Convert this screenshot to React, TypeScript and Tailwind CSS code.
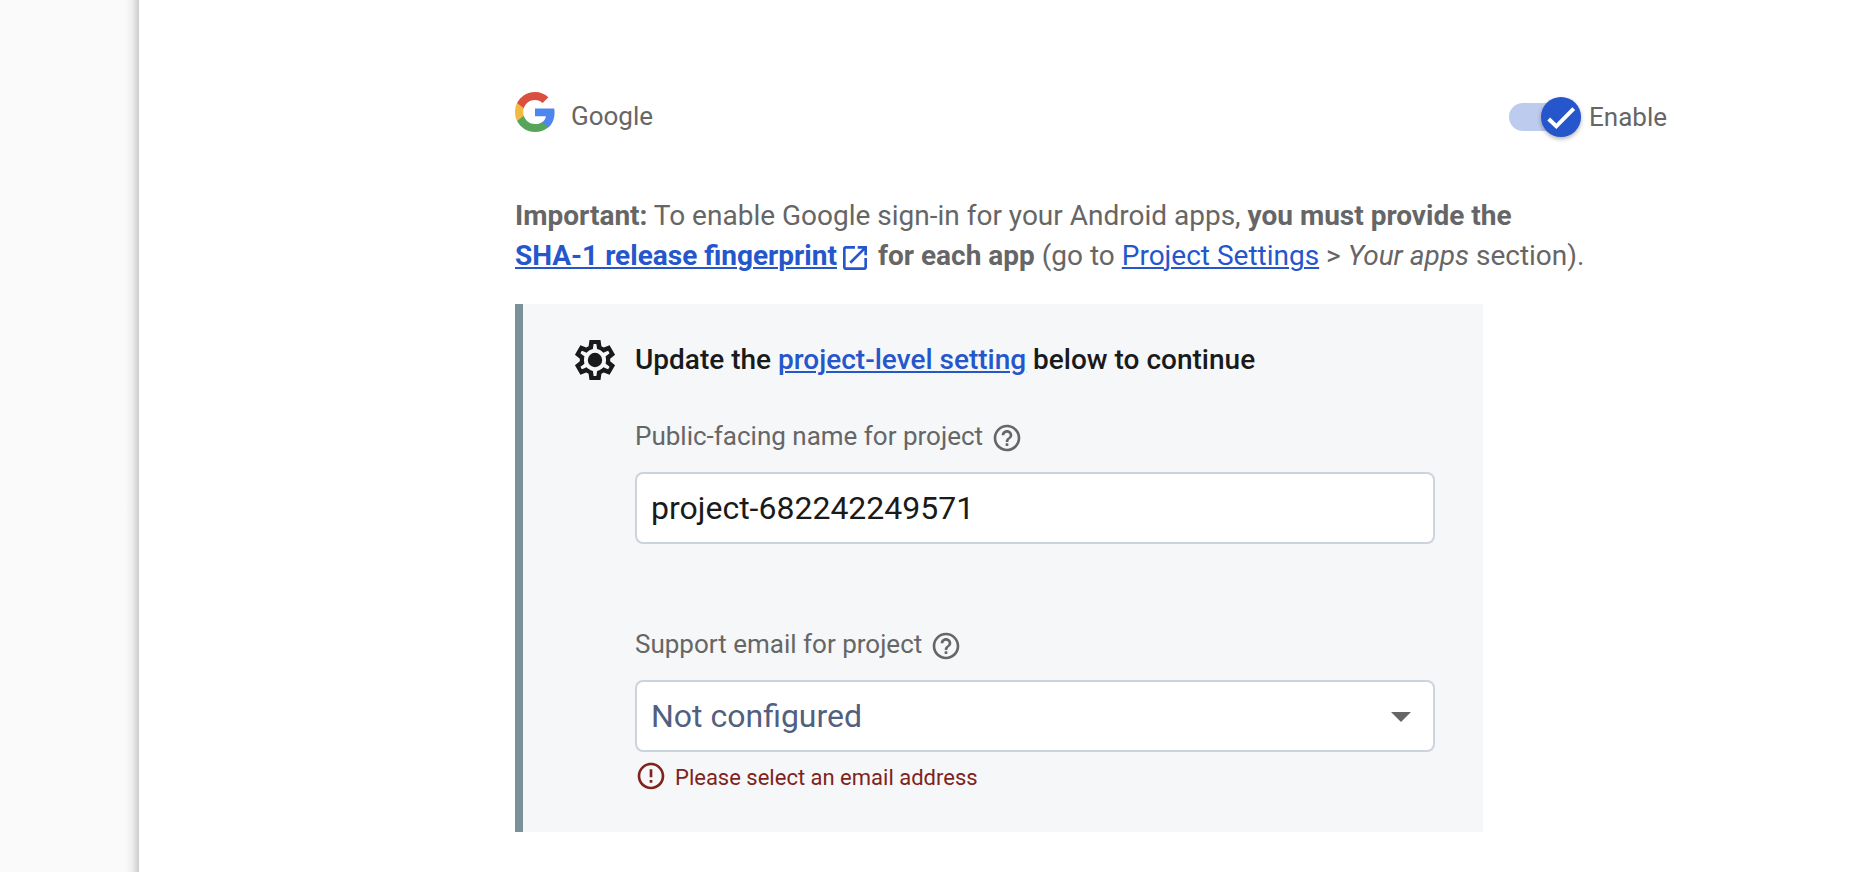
import React from "react";

function GoogleLogo() {
  return (
    <svg className="h-10 w-10 shrink-0" viewBox="0 0 48 48">
      <path fill="#4c86ee" d="M47.5 24.5c0-1.6-.15-3.2-.4-4.7H24v9.3h13.2c-.6 3-2.3 5.600-4.900 7.300v6h8c4.600-4.300 7.200-10.600 7.200-17.900z" />
      <path fill="#57a55b" d="M24 48c6.500 0 12-2.150 16-5.800l-7.800-6c-2.150 1.450-4.900 2.300-8.200 2.300-6.300 0-11.600-4.200-13.500-9.900H2.500v6.200C6.500 42.600 14.600 48 24 48z" />
      <path fill="#f0bb40" d="M10.500 28.600c-.5-1.450-.75-3-.75-4.600s.27-3.150.75-4.600v-6.200h-8C.9 16.450 0 20.100 0 24s.9 7.550 2.500 10.800l8-6.200z" />
      <path fill="#d95040" d="M24 9.500c3.500 0 6.700 1.200 9.200 3.600l6.850-6.850C35.900 2.400 30.500 0 24 0 14.600 0 6.500 5.400 2.500 13.200l8 6.200C12.400 13.700 17.700 9.500 24 9.500z" />
    </svg>
  );
}

function HelpIcon() {
  return (
    <svg className="mt-1 h-8 w-8 shrink-0" viewBox="0 0 24 24" fill="#666">
      <path d="M11 18h2v-2h-2v2zm1-16C6.480 2 2 6.480 2 12s4.480 10 10 10 10-4.480 10-10S17.520 2 12 2zm0 18c-4.410 0-8-3.590-8-8s3.590-8 8-8 8 3.590 8 8-3.590 8-8 8zm0-14c-2.210 0-4 1.790-4 4h2c0-1.100.9-2 2-2s2 .9 2 2c0 2-3 1.750-3 5h2c0-2.250 3-2.500 3-5 0-2.210-1.790-4-4-4z" />
    </svg>
  );
}

function ErrorIcon() {
  return (
    <svg className="h-8 w-8 shrink-0" viewBox="0 0 24 24" fill="#7f231c">
      <path d="M11 15h2v2h-2zM11 7h2v6h-2zM12 2C6.480 2 2 6.480 2 12s4.480 10 10 10 10-4.480 10-10S17.520 2 12 2zm0 18c-4.410 0-8-3.590-8-8s3.590-8 8-8 8 3.590 8 8-3.590 8-8 8z" />
    </svg>
  );
}

function OpenInNewIcon() {
  return (
    <svg className="ml-0.5 inline-block h-8 w-8 align-[-9px]" viewBox="0 0 24 24" fill="#2556cb">
      <path d="M19 19H5V5h7V3H5c-1.110 0-2 .9-2 2v14c0 1.100.89 2 2 2h14c1.100 0 2-.9 2-2v-7h-2v7zM14 3v2h3.590l-9.830 9.830 1.410 1.410L19 6.410V10h2V3h-7z" />
    </svg>
  );
}

function GearIcon() {
  return (
    <svg className="h-12 w-12 shrink-0" viewBox="0 0 24 24" fill="#1a1a1a">
      <path
        fillRule="evenodd"
        d="M9.250 2L14.750 2L15.200 5.100L16.380 5.780L19.290 4.620L22.030 9.380L19.580 11.320L19.580 12.680L22.030 14.620L19.290 19.380L16.380 18.220L15.200 18.900L14.750 22L9.250 22L8.800 18.900L7.620 18.220L4.710 19.380L1.970 14.620L4.420 12.680L4.420 11.320L1.970 9.380L4.710 4.620L7.620 5.780L8.800 5.100ZM17.450 11.270c.04.31.05.52.05.73 0 .21-.02.43-.05.73l-.14 1.130.89.7 1.080.84-.7 1.210-1.270-.51-1.040-.42-.9.68c-.43.32-.84.56-1.250.73l-1.060.43-.16 1.130-.2 1.350h-1.400l-.19-1.350-.16-1.130-1.060-.43c-.43-.18-.83-.41-1.230-.71l-.91-.7-1.060.43-1.270.51-.7-1.210 1.080-.84.89-.7-.14-1.130c-.03-.31-.05-.54-.05-.74s.02-.43.05-.73l.14-1.130-.89-.7-1.080-.84.7-1.210 1.270.51 1.040.42.9-.68c.43-.32.84-.56 1.250-.73l1.060-.43.16-1.130.2-1.350h1.390l.19 1.350.16 1.130 1.060.43c.43.18.83.41 1.230.71l.91.7 1.060-.43 1.270-.51.7 1.210-1.070.85-.89.7.14 1.130z"
      />
      <circle cx="12" cy="12" r="3.600" />
    </svg>
  );
}

function Toggle() {
  return (
    <div className="flex h-10 w-[72px] items-center">
      <div className="flex h-7 w-full items-center justify-end rounded-full bg-[#bdccee]">
        <div className="flex h-10 w-10 items-center justify-center rounded-full bg-[#2556cb] shadow-[0_2px_4px_rgba(0,0,0,0.3)]">
          <svg className="h-10 w-10" viewBox="0 0 40 40" fill="none" stroke="#fff" strokeWidth="4">
            <path d="M7.700 22 15.300 29.300 32.700 11.600" />
          </svg>
        </div>
      </div>
    </div>
  );
}

const link = "text-[#2556cb] underline decoration-2 underline-offset-2";

export default function App() {
  return (
    <div className="flex h-[872px] w-full overflow-hidden bg-white font-['Roboto',sans-serif] text-[#666]">
      <aside className="flex w-[139px] shrink-0 justify-end bg-[#fafafa]">
        <div className="w-3.5 bg-linear-to-r from-[#fafafa] via-[#efefef] to-[#cccccc]" />
      </aside>
      <main className="pl-[376px] pt-[92px]">
        <header className="flex w-[1152px] items-start justify-between text-[26px] leading-12">
          <div className="flex">
            <GoogleLogo />
            <span className="ml-4">Google</span>
          </div>
          <div className="flex pt-px">
            <div className="pt-1">
              <Toggle />
            </div>
            <span className="ml-2">Enable</span>
          </div>
        </header>

        <p className="mt-[55px] h-20 text-[28px] leading-10 whitespace-nowrap">
          <b>Important:</b> To enable Google sign-in for your Android apps, <b>you must provide the</b>
          <br />
          <b>
            <a className={link}>SHA-1 release fingerprint</a>
            <OpenInNewIcon /> for each app
          </b>{" "}
          (go to <a className={link}>Project Settings</a> &gt; <i>Your apps</i> section).
        </p>

        <section className="mt-7 h-[528px] w-[968px] border-l-8 border-[#7b909b] bg-[#f5f7f9] pl-12 pt-8">
          <h2 className="flex items-center gap-4 text-[28px] font-medium leading-12 text-[#1a1a1a]">
            <GearIcon />
            <span>
              Update the <a className={link}>project-level setting</a> below to continue
            </span>
          </h2>
          <div className="ml-16 mt-[34px] w-[800px]">
            <label className="flex h-9 items-center gap-2 text-[26px] leading-9">
              Public-facing name for project <HelpIcon />
            </label>
            <div className="mt-4.5 flex h-[72px] items-center rounded-lg border-2 border-[#cdd3dd] bg-white pl-3.5 text-[32px] text-[#1a1a1a]">
              project-682242249571
            </div>
            <label className="mt-[82px] flex h-9 items-center gap-2 text-[26px] leading-9">
              Support email for project <HelpIcon />
            </label>
            <div className="mt-4.5 flex h-[72px] items-center justify-between rounded-lg border-2 border-[#cdd3dd] bg-white pl-3.5 pr-[22px] text-[32px] text-[#525f7f]">
              Not configured
              <svg className="mt-0.5 h-2.5 w-5" viewBox="0 0 20 10" fill="#666">
                <path d="M0 0h20L10 10z" />
              </svg>
            </div>
            <div className="mt-2 flex items-start gap-2 text-[22px] leading-[35px] text-[#7f231c]">
              <ErrorIcon />
              Please select an email address
            </div>
          </div>
        </section>
      </main>
    </div>
  );
}
